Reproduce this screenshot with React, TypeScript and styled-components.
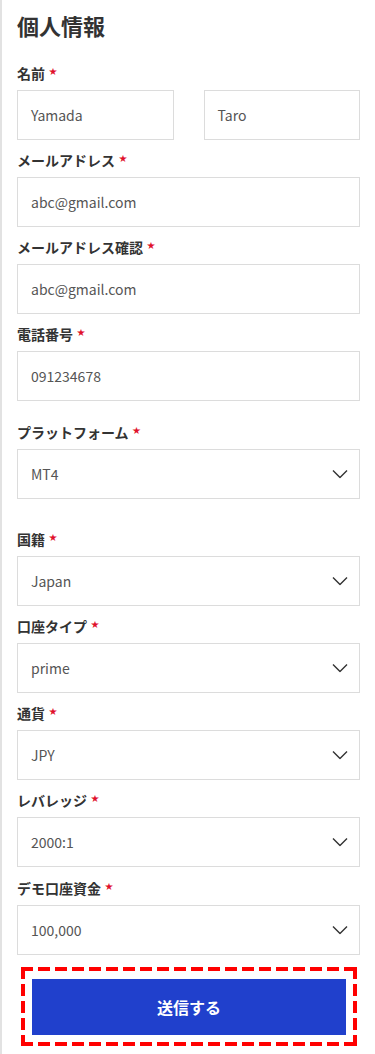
import React from 'react';
import styled, { createGlobalStyle } from 'styled-components';

const GlobalStyle = createGlobalStyle`
  html, body {
    margin: 0;
    padding: 0;
    background: #ffffff;
  }
  body {
    font-family: 'Noto Sans CJK JP', 'Noto Sans', sans-serif;
    color: #333333;
  }
  * {
    box-sizing: border-box;
  }
`;

const Page = styled.div`
  min-height: 100vh;
  border-left: 2px solid #e2e2e2;
  padding: 9px 15px 20px 15px;
`;

const Title = styled.h2`
  margin: 0 0 21px;
  font-size: 22px;
  line-height: 33px;
  font-weight: 700;
  color: #333333;
`;

const Field = styled.div<{ $top: number }>`
  display: flex;
  flex-direction: column;
  margin-top: ${(p) => p.$top}px;
`;

const Label = styled.div`
  display: flex;
  align-items: flex-start;
  font-size: 14px;
  line-height: 20px;
  font-weight: 700;
  color: #333333;
  margin-bottom: 7px;
`;

const Star = styled.span`
  color: #e0112b;
  font-size: 8px;
  line-height: 8px;
  margin: 4px 0 0 4px;
`;

const Row = styled.div`
  display: grid;
  grid-template-columns: 1fr 1fr;
  gap: 30px;
`;

const Box = styled.div`
  position: relative;
  height: 50px;
  border: 1px solid #dcdcdc;
  background: #ffffff;
  display: flex;
  align-items: center;
  padding: 0 13px;
  font-size: 14px;
  color: #555555;
`;

const Chevron = styled.svg`
  position: absolute;
  right: 11px;
  top: 50%;
  transform: translateY(-50%);
`;

const dashH = 'repeating-linear-gradient(90deg, #ff0000 0 12px, transparent 12px 17px)';
const dashV = 'repeating-linear-gradient(180deg, #ff0000 0 12px, transparent 12px 17px)';

const SubmitFrame = styled.div`
  margin: 12px 3px 0 4px;
  padding: 12px 11px 11px;
  background:
    ${dashH} left top / 100% 4px no-repeat,
    ${dashH} left bottom / 100% 4px no-repeat,
    ${dashV} left top / 4px 100% no-repeat,
    ${dashV} right top / 4px 100% no-repeat;
`;

const SubmitButton = styled.button`
  display: block;
  width: 100%;
  height: 56px;
  border: none;
  background: #2040cc;
  color: #ffffff;
  font-family: inherit;
  font-size: 16px;
  font-weight: 700;
  cursor: pointer;
`;

type FieldDef = { label: string; value: string; select?: boolean; top: number };

const fields: FieldDef[] = [
  { label: 'メールアドレス', value: 'abc@gmail.com', top: 10 },
  { label: 'メールアドレス確認', value: 'abc@gmail.com', top: 10 },
  { label: '電話番号', value: '091234678', top: 10 },
  { label: 'プラットフォーム', value: 'MT4', select: true, top: 21 },
  { label: '国籍', value: 'Japan', select: true, top: 30 },
  { label: '口座タイプ', value: 'prime', select: true, top: 10 },
  { label: '通貨', value: 'JPY', select: true, top: 10 },
  { label: 'レバレッジ', value: '2000:1', select: true, top: 10 },
  { label: 'デモ口座資金', value: '100,000', select: true, top: 11 },
];

function ChevronDown() {
  return (
    <Chevron width='16' height='9' viewBox='0 0 16 9' fill='none'>
      <path d='M1 1l7 7 7-7' stroke='#333' strokeWidth='1.4' />
    </Chevron>
  );
}

function FieldLabel({ text }: { text: string }) {
  return (
    <Label>
      {text}
      <Star>★</Star>
    </Label>
  );
}

export default function App() {
  return (
    <>
      <GlobalStyle />
      <Page>
        <Title>個人情報</Title>
        <Field $top={0}>
          <FieldLabel text='名前' />
          <Row>
            <Box>Yamada</Box>
            <Box>Taro</Box>
          </Row>
        </Field>
        {fields.map((f) => (
          <Field key={f.label} $top={f.top}>
            <FieldLabel text={f.label} />
            <Box>
              {f.value}
              {f.select && <ChevronDown />}
            </Box>
          </Field>
        ))}
        <SubmitFrame>
          <SubmitButton>送信する</SubmitButton>
        </SubmitFrame>
      </Page>
    </>
  );
}
